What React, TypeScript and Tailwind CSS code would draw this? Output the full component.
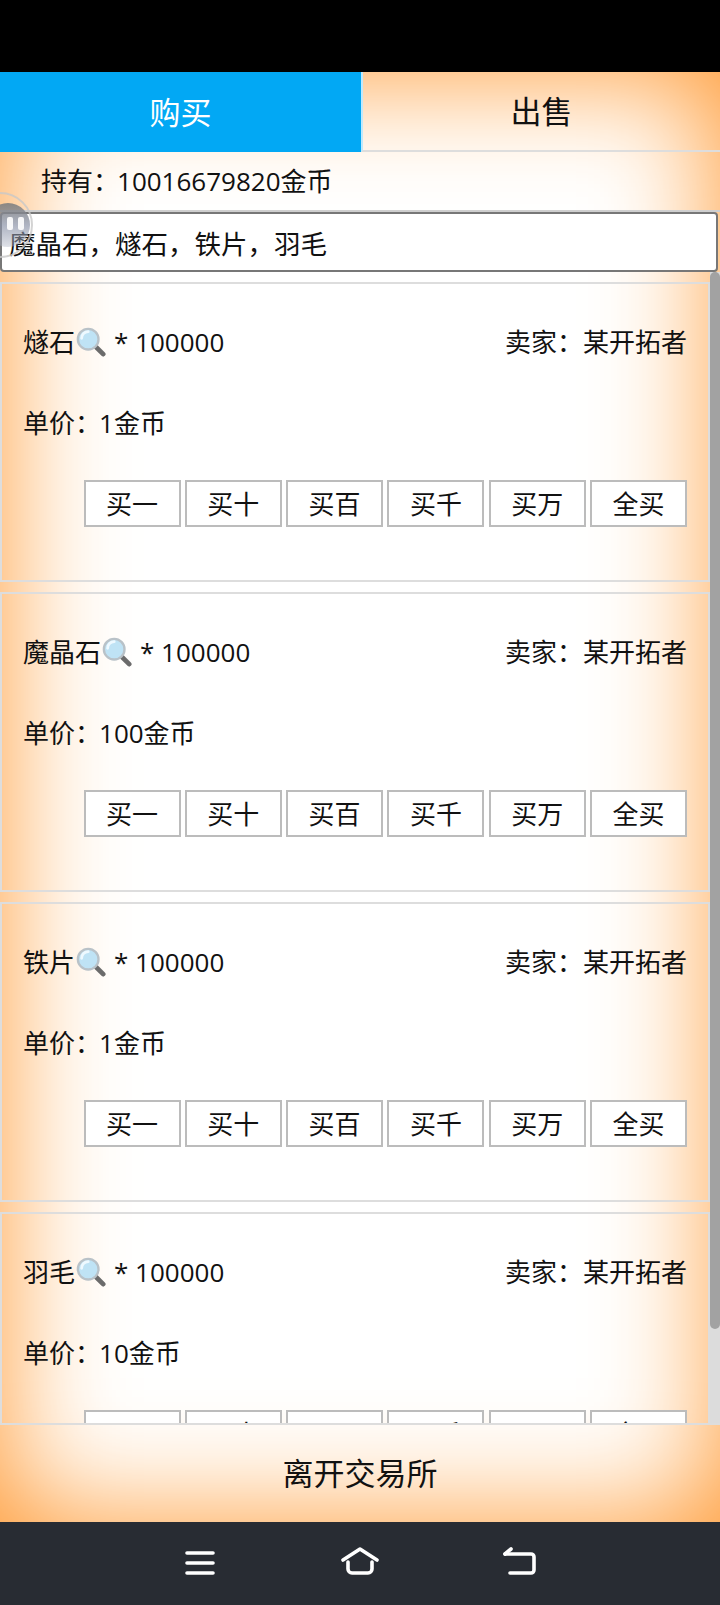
const FONT = "font-['Open_Sans','Noto_Sans_CJK_SC',sans-serif]";

const goods = [
  { name: "燧石", price: "1金币" },
  { name: "魔晶石", price: "100金币" },
  { name: "铁片", price: "1金币" },
  { name: "羽毛", price: "10金币" },
];

const actions = ["买一", "买十", "买百", "买千", "买万", "全买"];

const SearchEmoji = () => (
  <svg viewBox="0 0 32 32" className="ml-[1px] h-[30px] w-[30px] shrink-0">
    <path d="M20 20l9 9" stroke="#6b6b6b" strokeWidth="5" strokeLinecap="round" />
    <circle cx="13" cy="13" r="11" fill="#bfe3f5" stroke="#b9c2c8" strokeWidth="2.5" />
    <path d="M6 12a7 7 0 0 1 7-7" stroke="#eef9ff" strokeWidth="3" fill="none" strokeLinecap="round" />
  </svg>
);

const GoodsCard = ({ name, price }: { name: string; price: string }) => (
  <div className="mb-[10px] h-[300px] shrink-0 border-2 border-[#ddd] pr-[21px] pl-[21px]">
    <div className="mt-[36px] flex h-[44px] items-center justify-between">
      <div className="flex items-center">
        <span>{name}</span>
        <SearchEmoji />
        <span className="ml-[8px]">* 100000</span>
      </div>
      <span>卖家：某开拓者</span>
    </div>
    <div className="mt-[37px] flex h-[44px] items-center">
      <span className="mr-[-2px]">单价：</span>
      {price}
    </div>
    <div className="mt-[35px] flex justify-end gap-[4.3px]">
      {actions.map((a) => (
        <button key={a} className="h-[47px] w-[97px] border-2 border-[#bcbcbc] bg-white pt-[2px] text-[26px]">
          {a}
        </button>
      ))}
    </div>
  </div>
);

export default function App() {
  return (
    <div className={`${FONT} relative flex h-[1605px] w-[720px] flex-col overflow-hidden bg-black text-[26px] text-[#111]`}>
      <div className="h-[72px] shrink-0 bg-black" />

      <main className="flex min-h-0 flex-1 flex-col bg-white shadow-[inset_0_0_120px_#ff9428]">
        <div className="flex h-[80px] shrink-0">
          <button className="w-[361px] bg-[#02a8f4] text-[31px] text-white">购买</button>
          <button className="flex-1 border-b-2 border-l-2 border-[#ddd] border-l-[#bfe9fc] text-[31px]">出售</button>
        </div>

        <div className="flex h-[60px] shrink-0 items-center border-b-2 border-[#cfcfcf] pl-[41px]">
          <span className="mr-[-2px]">持有：</span>10016679820金币
        </div>

        <input
          readOnly
          defaultValue="魔晶石，燧石，铁片，羽毛"
          className="h-[60px] w-[718px] shrink-0 rounded-[4px] border-2 border-[#777] bg-white pl-[7px] text-[26.5px] outline-none"
        />

        <div className="relative min-h-0 flex-1 overflow-hidden">
          <div className="flex h-full w-[710px] flex-col pt-[10px]">
            {goods.map((g) => (
              <GoodsCard key={g.name} name={g.name} price={g.price} />
            ))}
          </div>
          <div className="absolute top-0 right-0 bottom-0 w-[10px] bg-[#dcdcdc]">
            <div className="h-[1057px] rounded-[5px] bg-[#a2a2a2]" />
          </div>
        </div>

        <button className="h-[99px] shrink-0 border-t-2 border-[#ddd] text-[31px]">离开交易所</button>
      </main>

      <nav className="h-[83px] shrink-0 bg-[#282c33]">
        <svg viewBox="0 0 30 24" className="absolute top-[1551px] left-[185px] h-[24px] w-[30px]" fill="none" stroke="#fff" strokeWidth="3.6" strokeLinecap="round">
          <path d="M2 2h26M2 12h26M2 22h26" />
        </svg>
        <svg viewBox="0 0 38 28" className="absolute top-[1547px] left-[341px] h-[28px] w-[38px]" fill="none" stroke="#fff" strokeWidth="3.6" strokeLinecap="round" strokeLinejoin="round">
          <path d="M2 13L19 2l17 11" />
          <path d="M7 15v7a4 4 0 0 0 4 4h16a4 4 0 0 0 4-4v-7" />
        </svg>
        <svg viewBox="0 0 33 28" className="absolute top-[1547px] left-[503px] h-[28px] w-[33px]" fill="none" stroke="#fff" strokeWidth="3.6" strokeLinecap="round" strokeLinejoin="round">
          <path d="M2 7h26a3 3 0 0 1 3 3v13a3 3 0 0 1-3 3H7" />
          <path d="M8 2L2 7" />
        </svg>
      </nav>

      <div className="absolute top-[192px] left-[-33px] h-[66px] w-[66px] rounded-full border-2 border-[#c8c8c8]/80" />
      <div className="absolute top-[203px] left-[-14px] h-[44px] w-[44px] rounded-full bg-gradient-to-b from-[#7f7f7f]/90 via-[#8b93a8]/70 to-[#b0b6c6]/40">
        <span className="absolute top-[14px] left-[21px] h-[13px] w-[6px] rounded-[2px] bg-white/90" />
        <span className="absolute top-[14px] left-[32px] h-[13px] w-[6px] rounded-[2px] bg-white/90" />
      </div>
    </div>
  );
}
